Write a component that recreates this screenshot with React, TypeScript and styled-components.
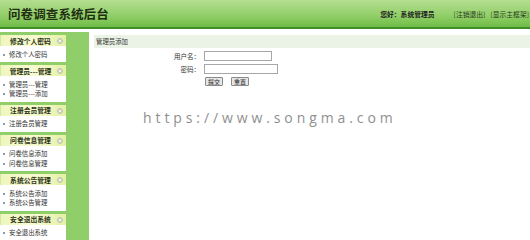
import styled, { createGlobalStyle } from 'styled-components';

const GlobalStyle = createGlobalStyle`
  html, body {
    margin: 0;
    padding: 0;
    background: #ffffff;
  }
  body {
    font-family: "Noto Sans CJK SC", "Noto Sans", sans-serif;
    color: #333333;
  }
`;

const menu = [
  { title: '修改个人密码', items: ['修改个人密码'] },
  { title: '管理员---管理', items: ['管理员---管理', '管理员---添加'] },
  { title: '注册会员管理', items: ['注册会员管理'] },
  { title: '问卷信息管理', items: ['问卷信息添加', '问卷信息管理'] },
  { title: '系统公告管理', items: ['系统公告添加', '系统公告管理'] },
  { title: '安全退出系统', items: ['安全退出系统'] },
];

export default function App() {
  return (
    <>
      <GlobalStyle />
      <Page>
        <Header>
          <Title>问卷调查系统后台</Title>
          <UserBox>
            <Greeting>您好：系统管理员</Greeting>
            <HeaderLink>[注销退出]</HeaderLink>
            <HeaderLink>[显示主框架]</HeaderLink>
          </UserBox>
        </Header>
        <Body>
          <Sidebar>
            <Menu>
              {menu.map((group) => (
                <Group key={group.title}>
                  <GroupTitle>
                    {group.title}
                    <Toggle />
                  </GroupTitle>
                  <ItemList>
                    {group.items.map((item) => (
                      <Item key={item}>{item}</Item>
                    ))}
                  </ItemList>
                </Group>
              ))}
            </Menu>
          </Sidebar>
          <Main>
            <PanelTitle>管理员添加</PanelTitle>
            <Form>
              <Label>用户名：</Label>
              <Field>
                <Input $width={68} />
              </Field>
              <Label>密码：</Label>
              <Field>
                <Input $width={74} type="password" />
              </Field>
              <span />
              <Buttons>
                <Button>提交</Button>
                <Button>重置</Button>
              </Buttons>
            </Form>
          </Main>
        </Body>
        <Watermark>https://www.songma.com</Watermark>
      </Page>
    </>
  );
}

const Page = styled.div`
  position: relative;
  width: 530px;
  height: 240px;
  overflow: hidden;
  display: flex;
  flex-direction: column;
`;

const Header = styled.header`
  height: 27px;
  flex-shrink: 0;
  display: flex;
  align-items: center;
  justify-content: space-between;
  padding: 0 1px 0 8px;
  background: linear-gradient(to bottom, #b4de90 0%, #93d06b 55%, #70bc47 100%);
  border-bottom: 2px solid #3f8f26;
`;

const Title = styled.h1`
  margin: 0;
  font-size: 12.5px;
  font-weight: 700;
  color: #1f2d12;
  letter-spacing: 0.1px;
`;

const UserBox = styled.div`
  display: flex;
  align-items: center;
  gap: 5px;
  font-size: 6.8px;
  color: #222;
`;

const Greeting = styled.span`
  font-weight: 700;
  margin-right: 14px;
`;

const HeaderLink = styled.a`
  color: #2a3a1e;
  cursor: pointer;
`;

const Body = styled.div`
  flex: 1;
  display: flex;
  margin-top: 3px;
`;

const Sidebar = styled.aside`
  width: 89px;
  flex-shrink: 0;
  background: #8fce69;
  padding-top: 3px;
`;

const Menu = styled.nav`
  width: 66px;
  display: flex;
  flex-direction: column;
  gap: 3px;
`;

const Group = styled.section`
  display: flex;
  flex-direction: column;
`;

const GroupTitle = styled.div`
  position: relative;
  height: 11px;
  display: flex;
  align-items: center;
  justify-content: center;
  padding-right: 6px;
  font-size: 6.8px;
  font-weight: 700;
  color: #2b3318;
  background: linear-gradient(to right, #eef6bf 0%, #f8fbd2 50%, #e4f0a4 100%);
  border-left: 1px solid #d6e8a0;
`;

const Toggle = styled.span`
  position: absolute;
  right: 3px;
  top: 3px;
  width: 4px;
  height: 4px;
  border-radius: 50%;
  background: #ffffff;
  border: 0.5px solid #b9c2a8;
  box-shadow: inset 0 0 0 1px #c9d0bd;
`;

const ItemList = styled.ul`
  margin: 0;
  list-style: none;
  padding: 3.5px 0 3px;
  background: #ffffff;
`;

const Item = styled.li`
  position: relative;
  height: 9.5px;
  line-height: 9.5px;
  padding-left: 9px;
  font-size: 6.4px;
  color: #333;

  &::before {
    content: '';
    position: absolute;
    left: 3px;
    top: 4px;
    width: 2px;
    height: 2px;
    background: #7f9fc0;
  }
`;

const Main = styled.main`
  flex: 1;
  padding: 3px 0 0 5px;
`;

const PanelTitle = styled.div`
  height: 13px;
  line-height: 13px;
  padding-left: 2px;
  font-size: 6.4px;
  color: #333;
  background: #ebf3e6;
`;

const Form = styled.div`
  display: grid;
  grid-template-columns: 25% 1fr;
  grid-auto-rows: 13px;
  align-items: center;
  margin-top: 1px;
`;

const Label = styled.span`
  text-align: right;
  font-size: 6.5px;
  padding-right: 3px;
`;

const Field = styled.div`
  display: flex;
  align-items: center;
  padding-left: 1px;
`;

const Input = styled.input<{ $width: number }>`
  box-sizing: border-box;
  width: ${(p) => p.$width}px;
  height: 10px;
  margin: 0;
  padding: 0;
  border: 1px solid #a7a7a7;
  background: #fff;
`;

const Buttons = styled.div`
  display: flex;
  gap: 8px;
  padding-left: 2px;
`;

const Button = styled.button`
  box-sizing: border-box;
  width: 18px;
  height: 9px;
  margin: 0;
  padding: 0;
  font-family: "Noto Sans CJK SC", sans-serif;
  font-size: 6px;
  line-height: 7px;
  color: #222;
  background: #e6e6e6;
  border: 1px solid #8a8a8a;
  border-radius: 1px;
`;

const Watermark = styled.div`
  position: absolute;
  left: 143px;
  top: 108px;
  font-family: "Open Sans", sans-serif;
  font-size: 14px;
  letter-spacing: 3.9px;
  color: #8f8f8f;
  pointer-events: none;
`;
